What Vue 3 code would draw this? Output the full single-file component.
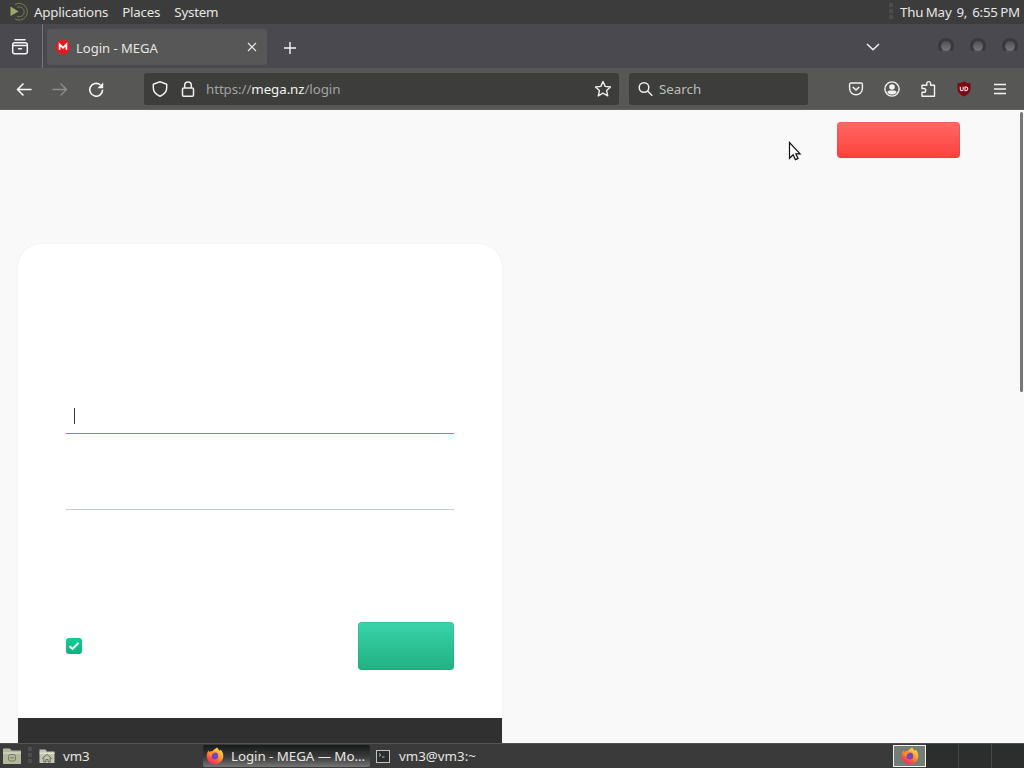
<script setup>
    import { ref } from 'vue';

    const menus = ['Applications', 'Places', 'System'];
    const clock = ref('Thu May  9,  6:55 PM');
    const tabTitle = ref('Login - MEGA');
    const remember = ref(true);
</script>

<template>
    <div class="desktop">
        <!-- gradients shared by both firefox logos -->
        <svg class="defs" width="0" height="0">
            <defs>
                <linearGradient id="fox" x1="0.8" y1="0" x2="0.25" y2="1">
                    <stop offset="0" stop-color="#ffe14a" />
                    <stop offset="0.45" stop-color="#ff9a2e" />
                    <stop offset="0.75" stop-color="#fb4f42" />
                    <stop offset="1" stop-color="#e9257c" />
                </linearGradient>
                <symbol id="firefox" viewBox="0 0 18 18">
                    <path fill="url(#fox)" d="M11 .5c1 .8 1.8 2 2.2 3.2.6-.1 1.2-.5 1.4-.9C16.5 4.5 17.5 7 17.3 9.6 17 14 13.5 17.3 9 17.3S.8 14 .7 9.6C.6 7 1.5 4.6 2.8 3.2c0 .9.2 1.3.5 1.7.8-.5 2-.7 3-.5C7.3 2.5 9.5 2 11 .5z" />
                    <circle cx="8.8" cy="9" r="3.4" fill="#7546b9" />
                    <path fill="#ff8b35" d="M3.3 5c2-.9 3.8-.6 5.5.8-.5.8-2 .9-2.8 1.500-.4.5-.3 1.3.2 1.9-1.6.4-3-.8-2.9-4.2z" />
                </symbol>
            </defs>
        </svg>

        <div class="panel">
            <svg class="mate-icon" width="20" height="20" viewBox="0 0 20 20" fill="none">
                <path d="M1.5 4.5v9.5l8-4.6z" fill="#9ba76c" />
                <path d="M6 2.5a8.3 8.3 0 1 1 0 14.5" stroke="#77814f" stroke-width="1" />
                <path d="M8 5.3a5 5 0 1 1 0 9" stroke="#77814f" stroke-width="1" />
            </svg>
            <span v-for="menu in menus" :key="menu" class="menu">{{ menu }}</span>
            <div class="grip clock-grip"></div>
            <span class="clock">{{ clock }}</span>
        </div>

        <div class="tab-bar">
            <div class="view-button">
                <svg width="18" height="18" viewBox="0 0 18 18" fill="none" stroke="#f2f2f4" stroke-width="1.5" stroke-linecap="round">
                    <path d="M4 1.8h10" />
                    <rect x="1.7" y="4.7" width="14.6" height="11" rx="2" />
                    <path d="M2 7.5h14M7.5 10.8h3" />
                </svg>
            </div>
            <div class="tab">
                <svg width="16" height="16" viewBox="0 0 16 16">
                    <circle cx="8" cy="8" r="7.3" fill="#e81823" />
                    <path d="M4.6 10.8V5.4L8 8.8l3.4-3.4v5.4" fill="none" stroke="#fff" stroke-width="1.7" />
                </svg>
                <span class="tab-title">{{ tabTitle }}</span>
                <svg class="tab-close" width="10" height="10" viewBox="0 0 10 10" stroke="#e8e8e8" stroke-width="1.2">
                    <path d="M1 1l8 8M9 1L1 9" />
                </svg>
            </div>
            <svg class="new-tab" width="14" height="14" viewBox="0 0 14 14" stroke="#f5f5f5" stroke-width="1.4">
                <path d="M7 1v12M1 7h12" />
            </svg>
            <svg class="all-tabs" width="14" height="8" viewBox="0 0 14 8" fill="none" stroke="#f0f0f0" stroke-width="1.5">
                <path d="M1 1l6 5.800L13 1" />
            </svg>
            <div class="window-controls">
                <div v-for="n in 3" :key="n" class="control"></div>
            </div>
        </div>

        <div class="toolbar">
            <svg class="back" width="16" height="16" viewBox="0 0 16 16" fill="none" stroke="#f7f7f7" stroke-width="1.5">
                <path d="M15.5 8.5H1.5M7.5 2.5l-6 6 6 6" />
            </svg>
            <svg class="forward" width="16" height="16" viewBox="0 0 16 16" fill="none" stroke="#8f8f8f" stroke-width="1.4">
                <path d="M.5 8.5h14M8.5 2.5l6 6-6 6" />
            </svg>
            <svg class="reload" width="16" height="16" viewBox="0 0 16 16" fill="none" stroke="#f7f7f7" stroke-width="1.6">
                <path d="M14.6 8.8A6.4 6.4 0 1 1 12.3 3.900" />
                <path d="M15.2 1.5v5.800H9.4z" fill="#f7f7f7" stroke="none" />
            </svg>

            <div class="url-bar">
                <svg class="shield" width="16" height="16" viewBox="0 0 16 16" fill="none" stroke="#ededed" stroke-width="1.5" stroke-linejoin="round">
                    <path d="M8 .8l6.7 2.500v3.500c0 3.500-2.600 6.800-6.700 8.500C3.900 13.600 1.300 10.300 1.300 6.800V3.300z" />
                </svg>
                <svg class="lock" width="14" height="16" viewBox="0 0 14 16" fill="none" stroke="#ededed" stroke-width="1.5">
                    <rect x="1.5" y="7" width="11" height="8.2" rx="1.2" />
                    <path d="M3.7 7V4.2a3.3 3.3 0 0 1 6.6 0V7" />
                </svg>
                <span class="url">https://<b>mega.nz</b>/login</span>
                <svg class="star" width="18" height="18" viewBox="0 0 18 18" fill="none" stroke="#ededed" stroke-width="1.4" stroke-linejoin="round">
                    <path d="M9 1.5l2.2 4.9 5.3.6-3.9 3.6 1.1 5.3L9 13.2l-4.7 2.7 1.1-5.3L1.5 7l5.3-.6z" />
                </svg>
            </div>

            <div class="search-bar">
                <svg width="16" height="16" viewBox="0 0 16 16" fill="none" stroke="#ededed" stroke-width="1.5">
                    <circle cx="6" cy="6.5" r="4.8" />
                    <path d="M9.5 10l4.8 4.8" />
                </svg>
                <span>Search</span>
            </div>

            <div class="actions">
                <svg width="16" height="16" viewBox="0 0 16 16" fill="none" stroke="#f2f2f2" stroke-width="1.4" stroke-linejoin="round">
                    <path d="M3 2h10a1.4 1.4 0 0 1 1.4 1.4V7.500a6.400 6.300 0 0 1-12.800 0V3.400A1.4 1.4 0 0 1 3 2z" />
                    <path d="M4.800 6L8 9l3.200-3" stroke-width="1.7" />
                </svg>
                <svg width="16" height="16" viewBox="0 0 16 16" fill="none" stroke="#f2f2f2" stroke-width="1.4">
                    <circle cx="8" cy="8" r="7.1" />
                    <circle cx="8" cy="6" r="2.8" fill="#f2f2f2" stroke="none" />
                    <path d="M3.3 11.2c.8-1.500 2-1.700 3-1.700h3.400c1 0 2.200.2 3 1.700-1 1.600-2.800 2.300-4.700 2.300s-3.700-.7-4.700-2.300z" fill="#f2f2f2" stroke="none" />
                </svg>
                <svg width="16" height="18" viewBox="0 0 16 18" fill="none" stroke="#f2f2f2" stroke-width="1.4" stroke-linejoin="round">
                    <path d="M2 16.2V12.3h1.800a1.9 1.9 0 0 0 0-3.800H2V5.300h4.800V3.500a1.9 1.9 0 0 1 3.800 0v1.800h3.900v10.900z" />
                </svg>
                <svg width="16" height="16" viewBox="0 0 16 16" fill="none">
                    <path d="M8 .5c2 1.300 4.200 1.800 6.500 1.800v5c0 4-2.800 6.500-6.500 8.200-3.700-1.700-6.500-4.200-6.500-8.200v-5C3.800 2.300 6 1.800 8 .5z" fill="#80050f" />
                    <path d="M4.300 5.800v2.400a1.4 1.4 0 0 0 2.900 0V5.800M9 6h1a1.8 1.8 0 0 1 0 3.600H9z" stroke="#f4e5e6" stroke-width="1.1" />
                </svg>
                <svg class="app-menu" width="14" height="14" viewBox="0 0 14 14" stroke="#f2f2f2" stroke-width="1.4">
                    <path d="M1 2.500h12M1 7h12M1 11.500h12" />
                </svg>
            </div>
        </div>

        <div class="page">
            <div class="page-header">
                <button class="signup"></button>
            </div>
            <div class="login">
                <div class="login-form">
                    <div class="field active"><span class="caret"></span></div>
                    <div class="field"></div>
                    <div class="form-footer">
                        <div class="checkbox">
                            <svg v-if="remember" width="16" height="16" viewBox="0 0 16 16" fill="none" stroke="#fff" stroke-width="2">
                                <path d="M3.5 8.2l3 2.7 6-6" />
                            </svg>
                        </div>
                        <button class="submit"></button>
                    </div>
                </div>
                <div class="login-banner"></div>
            </div>
            <div class="scroll-thumb"></div>
            <svg class="cursor" width="16" height="22" viewBox="0 0 16 22">
                <path d="M1.5 1.500v15.800l3.600-3.500 2.300 4.800 2.700-1.200-2.200-4.500h4.200z" fill="#fff" stroke="#111" stroke-width="1.2" />
            </svg>
        </div>

        <div class="taskbar">
            <svg class="files" width="20" height="18" viewBox="0 0 20 18">
                <path d="M1 1.500h7l1.500 2H19v13.500H1z" fill="#b3b89d" />
                <path d="M1 6h18" stroke="#e3e5d5" />
                <rect x="6.5" y="7.5" width="7" height="6.5" rx="2" fill="none" stroke="#727960" />
                <path d="M8 10.8h4" stroke="#727960" />
            </svg>
            <div class="grip"></div>
            <div class="task vm">
                <svg width="16" height="16" viewBox="0 0 16 16">
                    <path d="M.5 1.500h6l1.300 2h7.700V15H.5z" fill="#c2c6b0" />
                    <path d="M.5 5.200h15" stroke="#eef0e3" />
                    <path d="M3.2 10.500L8 6.500l4.800 4M4.800 10v4h2.100v-2.500h2.200V14h2.100v-4" fill="none" stroke="#656b58" />
                </svg>
                <span>vm3</span>
            </div>
            <div class="task browser">
                <svg width="18" height="18"><use href="#firefox" /></svg>
                <span>Login - MEGA — Mo...</span>
            </div>
            <div class="task terminal">
                <svg width="14" height="13" viewBox="0 0 14 13" fill="none">
                    <rect x=".5" y=".5" width="13" height="12" fill="#2c2e2e" stroke="#c4c4c4" />
                    <path d="M3 3.500l1.800 1.500L3 6.500M6 7h2.500" stroke="#bcbcbc" />
                </svg>
                <span>vm3@vm3:~</span>
            </div>
            <div class="workspaces">
                <div class="workspace current">
                    <svg width="18" height="18"><use href="#firefox" /></svg>
                </div>
                <div class="workspace"></div>
                <div class="workspace"></div>
                <div class="workspace"></div>
            </div>
        </div>
    </div>
</template>

<style>
    body {
        overflow: hidden;
    }
</style>

<style scoped>
    .desktop {
        width: 1024px;
        height: 768px;
        display: flex;
        flex-direction: column;
        overflow: hidden;
        font-family: "Noto Sans", sans-serif;
        font-size: 13.33px;
        line-height: 18px;
        color: #e6e6e3;
    }

    .desktop * {
        box-sizing: border-box;
    }

    .desktop svg {
        flex: none;
        display: block;
    }

    .desktop .defs {
        position: absolute;
    }

    .panel {
        height: 24px;
        flex: none;
        display: flex;
        align-items: center;
        padding: 0 4px 0 9px;
        background: #3b3c3b;
        white-space: pre;
        letter-spacing: -0.2px;
    }

    .mate-icon {
        margin-right: 5px;
    }

    .menu {
        margin-right: 14px;
    }

    .clock {
        word-spacing: -0.8px;
    }

    .grip {
        width: 4px;
        height: 18px;
        background: repeating-linear-gradient(#4d4d4d 0 4px, transparent 4px 6px);
    }

    .clock-grip {
        margin-left: auto;
        margin-right: 7px;
    }

    .tab-bar {
        height: 44px;
        flex: none;
        display: flex;
        align-items: center;
        background: #4a4950;
    }

    .view-button {
        width: 43px;
        height: 44px;
        padding: 14px 0 0 11px;
        border-right: 1px solid #77767c;
    }

    .tab {
        width: 220px;
        height: 36px;
        margin: 1px 0 0 4px;
        padding: 0 10px 0 8px;
        display: flex;
        align-items: center;
        background: #575757;
        border-radius: 3px;
    }

    .tab-title {
        margin: 2px 0 0 5px;
        font-size: 13px;
    }

    .tab-close {
        margin-left: auto;
    }

    .new-tab {
        margin: 3px 0 0 16px;
    }

    .all-tabs {
        margin: 1px 0 0 auto;
    }

    .window-controls {
        display: flex;
        gap: 16px;
        margin: 0 6px 0 58px;
    }

    .control {
        width: 16px;
        height: 16px;
        border-radius: 50%;
        border: 3px solid #38383d;
        border-bottom-color: #4d4d53;
        background: linear-gradient(#505054, #77777b);
    }

    .toolbar {
        height: 42px;
        flex: none;
        display: flex;
        align-items: center;
        background: #575756;
        border-bottom: 1px solid #636363;
    }

    .back {
        margin-left: 16px;
    }

    .forward {
        margin-left: 20px;
    }

    .reload {
        margin-left: 20px;
    }

    .url-bar,
    .search-bar {
        height: 32px;
        display: flex;
        align-items: center;
        background: #3d3d3b;
        border-radius: 3px;
    }

    .url-bar {
        width: 475px;
        margin-left: 40px;
        padding: 0 7px 0 8px;
    }

    .lock {
        margin-left: 13px;
    }

    .url {
        margin-left: 11px;
        color: #a3a3a3;
        letter-spacing: -0.08px;
    }

    .url b {
        font-weight: 400;
        color: #f2f2f2;
    }

    .star {
        margin-left: auto;
    }

    .search-bar {
        width: 179px;
        margin-left: 10px;
        padding-left: 9px;
        gap: 5px;
        color: #bdbdbc;
    }

    .actions {
        margin: 0 17px 0 auto;
        display: flex;
        align-items: center;
        gap: 20px;
    }

    .app-menu {
        margin-left: 1px;
    }

    .page {
        position: relative;
        height: 633px;
        flex: none;
        overflow: hidden;
        background: #f9f9f9;
    }

    .page-header {
        display: flex;
        justify-content: flex-end;
        padding: 12px 64px 0 0;
    }

    button {
        padding: 0;
        border: 0;
        border-radius: 4px;
    }

    .signup {
        width: 123px;
        height: 36px;
        background: linear-gradient(#ff6964, #ff403d);
        box-shadow: inset 0 0 0 1px rgba(205, 45, 45, 0.2);
    }

    .login {
        width: 484px;
        margin: 86px 0 0 18px;
        border-radius: 24px 24px 0 0;
        overflow: hidden;
        background: #fff;
        box-shadow: 0 0 3px rgba(0, 0, 0, 0.05);
    }

    .login-form {
        height: 474px;
        padding: 154px 48px 0;
    }

    .field {
        height: 36px;
        margin-bottom: 40px;
        border-bottom: 1px solid #c4cccc;
    }

    .field.active {
        border-bottom-color: #2bb0ac;
    }

    .caret {
        display: block;
        width: 1px;
        height: 16px;
        margin: 0 0 0 8px;
        position: relative;
        top: 10px;
        background: #333;
    }

    .form-footer {
        display: flex;
        justify-content: space-between;
        align-items: center;
        margin-top: 112px;
    }

    .checkbox {
        width: 16px;
        height: 16px;
        border-radius: 3px;
        background: linear-gradient(#13cc96, #0bb47f);
    }

    .submit {
        width: 96px;
        height: 48px;
        background: linear-gradient(#3bd3ad, #20b17f);
        box-shadow: inset 0 0 0 1px rgba(20, 145, 100, 0.2);
    }

    .login-banner {
        height: 25px;
        background: #303030;
    }

    .scroll-thumb {
        position: absolute;
        top: 2px;
        right: 1px;
        width: 3px;
        height: 280px;
        border-radius: 2px;
        background: #77777a;
    }

    .cursor {
        position: absolute;
        left: 788px;
        top: 31px;
    }

    .taskbar {
        height: 25px;
        flex: none;
        display: flex;
        align-items: center;
        padding: 0 0 0 2px;
        background: #393a39;
        border-top: 1px solid #515251;
    }

    .taskbar .grip {
        margin-left: 6px;
    }

    .task {
        height: 22px;
        display: flex;
        align-items: center;
        white-space: nowrap;
    }

    .vm {
        width: 164px;
        margin-left: 7px;
        gap: 8px;
        letter-spacing: -0.1px;
    }

    .browser {
        width: 167px;
        padding-left: 3px;
        gap: 7px;
        background: linear-gradient(#191a1a, #3a3b3b 55%, #747574);
        border-radius: 2px;
        letter-spacing: -0.05px;
    }

    .terminal {
        width: 168px;
        padding-left: 6px;
        gap: 9px;
    }

    .workspaces {
        display: flex;
        margin: 0 -1px 0 auto;
    }

    .workspace {
        width: 33px;
        height: 24px;
        border-right: 1px solid #454645;
        background: #2c2d2d;
    }

    .workspace.current {
        display: flex;
        align-items: center;
        justify-content: center;
        height: 22px;
        margin-top: 1px;
        background: #747e76;
        border: 1px solid #f0f0f0;
    }
</style>
